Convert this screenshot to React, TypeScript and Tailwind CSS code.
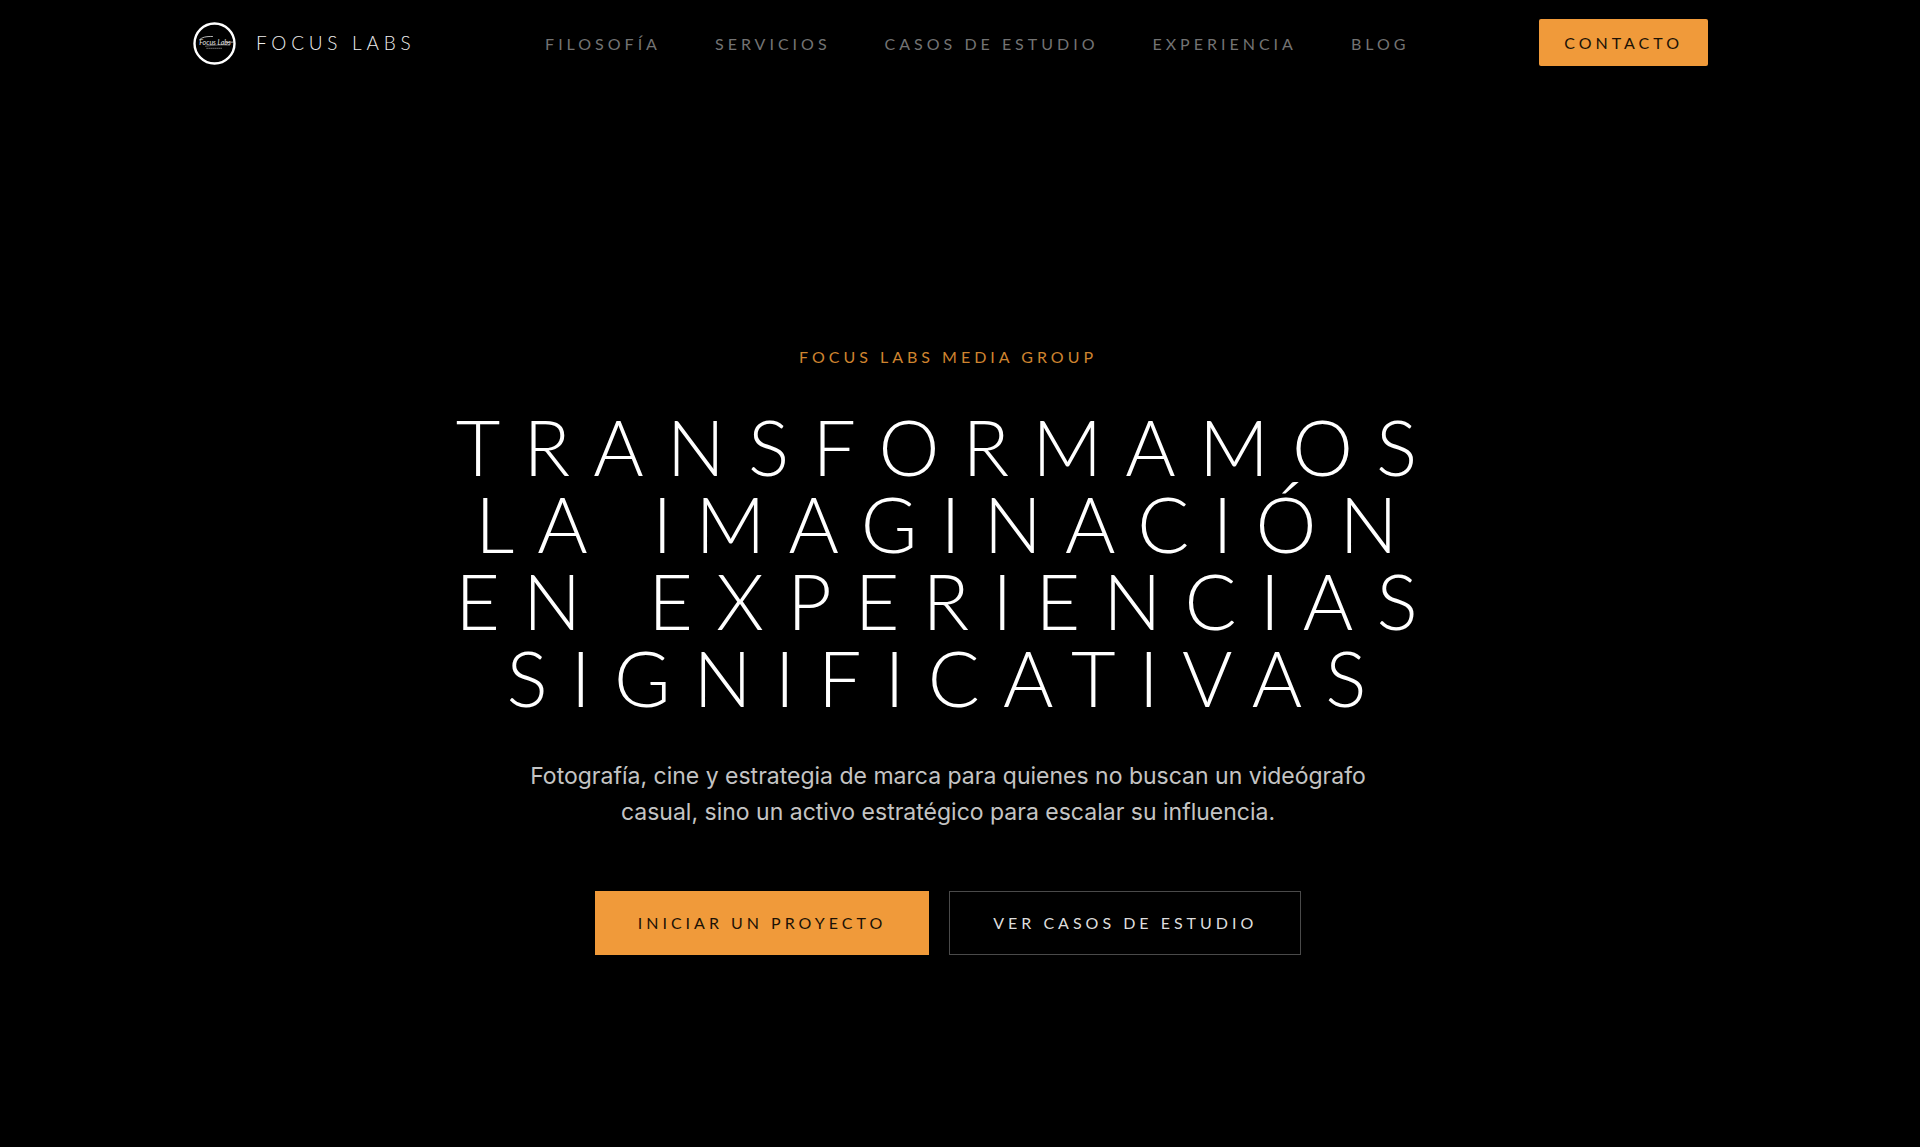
interface NavItem {
  label: string;
  href: string;
}

const navItems: NavItem[] = [
  { label: "Filosofía", href: "#filosofia" },
  { label: "Servicios", href: "#servicios" },
  { label: "Casos de Estudio", href: "#casos" },
  { label: "Experiencia", href: "#experiencia" },
  { label: "Blog", href: "#blog" },
];

const headline = ["Transformamos", "la imaginación", "en experiencias", "significativas"];

function Logo() {
  return (
    <svg viewBox="0 0 52 52" className="size-[52px]" aria-hidden="true">
      <circle cx="26.5" cy="26.5" r="20" fill="none" stroke="#fff" strokeWidth="2.4" />
      <text
        x="27"
        y="27.5"
        textAnchor="middle"
        className="fill-[#e5e5e5] font-['Lato',sans-serif] text-[7px] italic"
      >
        Focus Labs
      </text>
      {/* swashes around the signature */}
      <g fill="none" stroke="#e5e5e5" strokeLinecap="round">
        <path d="M11.5 22.8c2.500-2.500 6-3.500 13-3.300" strokeWidth="0.8" />
        <path d="M38 25.800c2-.5 4.500-.7 7-.7" strokeWidth="0.7" />
        <path d="M17.500 29.200c8-1.200 16-1.600 24-1" strokeWidth="0.6" opacity="0.7" />
      </g>
      <path d="M18.500 31.300h16" stroke="#777" strokeWidth="1.2" strokeDasharray="1.2 .8" />
    </svg>
  );
}

function Header() {
  return (
    <header className="mx-auto flex h-[85px] w-full max-w-[1520px] items-center justify-between">
      <a href="#inicio" className="flex items-center gap-4">
        <Logo />
        <span className="text-[19px] leading-7 font-light uppercase tracking-[0.25em] text-[#eee]">Focus Labs</span>
      </a>
      <nav className="flex items-center gap-[54px] pt-[3px]">
        {navItems.map((item) => (
          <a
            key={item.href}
            href={item.href}
            className="text-base uppercase tracking-[0.25em] text-[#737373] hover:text-white transition-colors"
          >
            {item.label}
          </a>
        ))}
      </nav>
      <a
        href="#contacto"
        className="flex h-[47px] items-center rounded-[2px] bg-[#f09a3a] px-[25px] text-base uppercase tracking-[0.25em] text-[#1c1206]"
      >
        Contacto
      </a>
    </header>
  );
}

export default function App() {
  return (
    <div className="min-h-screen bg-black pr-6 font-['Lato','Open_Sans',sans-serif] text-white">
      <Header />
      <main className="flex flex-col items-center px-6 pt-[260px] pb-24 text-center">
        <p className="text-base uppercase tracking-[0.25em] text-[#cf842f]">Focus Labs Media Group</p>
        <h1 className="mt-[39px] text-[77px] leading-none font-light uppercase tracking-[0.3em]">
          {headline.map((line) => (
            <span key={line} className="block">
              {line}
            </span>
          ))}
        </h1>
        <p className="mt-[42px] max-w-[860px] font-['Inter',sans-serif] text-[23px] leading-9 text-[#c4c4c4]">
          Fotografía, cine y estrategia de marca para quienes no buscan un videógrafo casual, sino un
          activo estratégico para escalar su influencia.
        </p>
        <div className="mt-[61px] flex items-center gap-5">
          <a
            href="#contacto"
            className="flex h-16 items-center bg-[#f09a3a] px-[43px] text-base uppercase tracking-[0.25em] text-[#1c1206]"
          >
            Iniciar un proyecto
          </a>
          <a
            href="#casos"
            className="flex h-16 items-center border border-[#4a4a4a] px-[43px] text-base uppercase tracking-[0.25em] text-[#ddd]"
          >
            Ver casos de estudio
          </a>
        </div>
      </main>
    </div>
  );
}
